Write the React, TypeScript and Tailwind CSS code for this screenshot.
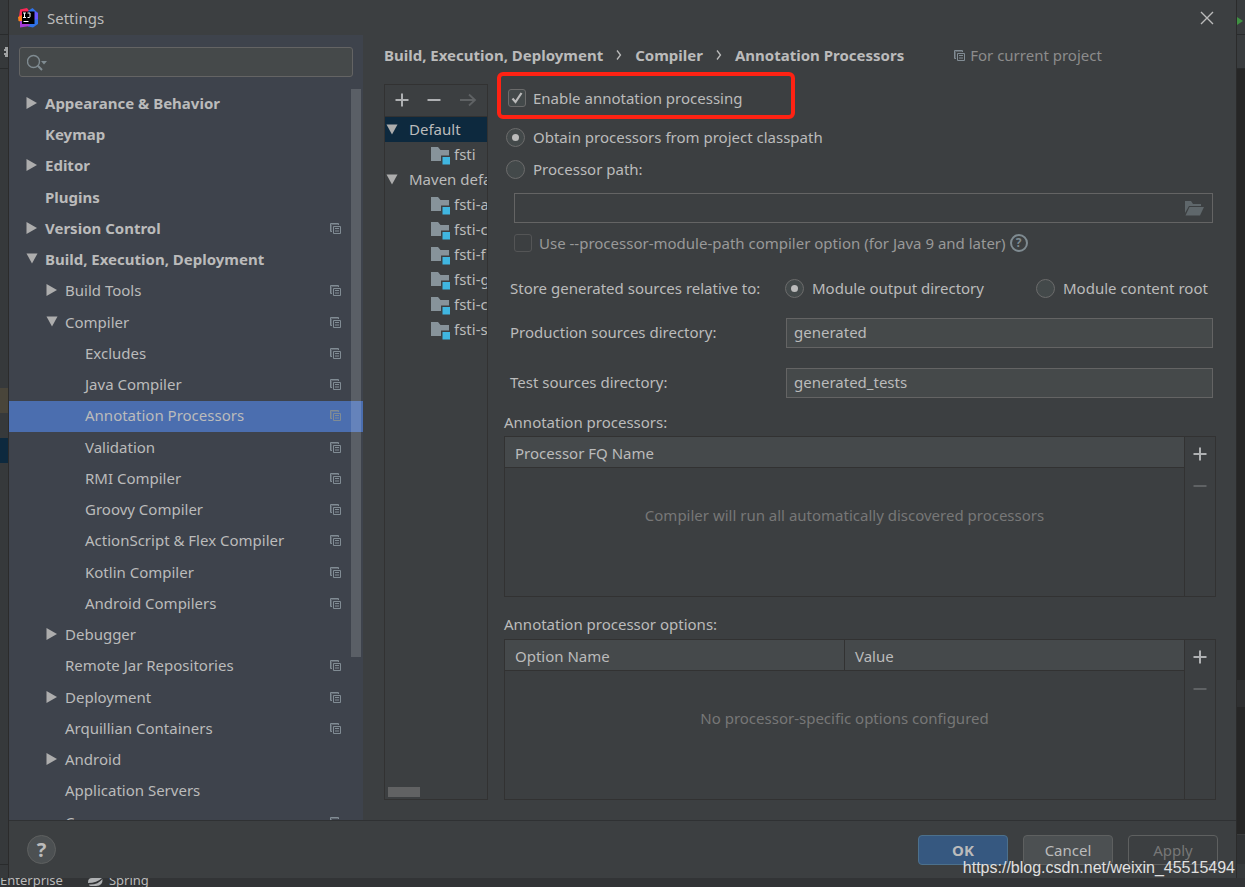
import { useState } from "react";
import type { InputHTMLAttributes, ReactNode } from "react";
import { clsx } from "clsx";

type TreeItem = {
  label: string;
  level: 0 | 1 | 2;
  state?: "open" | "closed";
  project?: boolean;
};

const TREE: TreeItem[] = [
  { label: "Appearance & Behavior", level: 0, state: "closed" },
  { label: "Keymap", level: 0 },
  { label: "Editor", level: 0, state: "closed" },
  { label: "Plugins", level: 0 },
  { label: "Version Control", level: 0, state: "closed", project: true },
  { label: "Build, Execution, Deployment", level: 0, state: "open" },
  { label: "Build Tools", level: 1, state: "closed", project: true },
  { label: "Compiler", level: 1, state: "open", project: true },
  { label: "Excludes", level: 2, project: true },
  { label: "Java Compiler", level: 2, project: true },
  { label: "Annotation Processors", level: 2, project: true },
  { label: "Validation", level: 2, project: true },
  { label: "RMI Compiler", level: 2, project: true },
  { label: "Groovy Compiler", level: 2, project: true },
  { label: "ActionScript & Flex Compiler", level: 2, project: true },
  { label: "Kotlin Compiler", level: 2, project: true },
  { label: "Android Compilers", level: 2, project: true },
  { label: "Debugger", level: 1, state: "closed" },
  { label: "Remote Jar Repositories", level: 1, project: true },
  { label: "Deployment", level: 1, state: "closed", project: true },
  { label: "Arquillian Containers", level: 1, project: true },
  { label: "Android", level: 1, state: "closed" },
  { label: "Application Servers", level: 1 },
  { label: "Coverage", level: 1, project: true },
];

const MODULES = ["fsti-a", "fsti-c", "fsti-f", "fsti-g", "fsti-c", "fsti-s"];

const INDENT = ["pl-[17px]", "pl-[37px]", "pl-[57px]"];

/* Icons */

const Arrow = ({ open }: { open: boolean }) => (
  <svg width="12" height="12" viewBox="0 0 12 12" fill="#adadad" className="shrink-0">
    {open ? <path d="M0.5 0.5h11L6 10.5z" /> : <path d="M0.5 0v12L11 6z" />}
  </svg>
);

const ProjectIcon = () => (
  <svg width="11" height="11" viewBox="0 0 11 11" fill="none" stroke="#818c94" className="shrink-0">
    <path d="M2 8.5H0.5v-8h8V2" />
    <path d="M3.5 3.5h7v7h-7z" />
    <path d="M5 5.5h4M5 8h4" />
    <path d="M1.5 8V1.5H8" opacity="0.5" />
  </svg>
);

const ModuleIcon = () => (
  <svg width="19" height="20" viewBox="0 0 19 20" className="shrink-0">
    <path d="M0 2h7l2.500 3H18v5.500h-8V16H0z" fill="#87939a" />
    <path d="M11.500 12h7.500v7.500h-7.500z" fill="#40b6e0" />
  </svg>
);

const FolderIcon = () => (
  <svg width="19" height="15" viewBox="0 0 19 15" fill="#5f676b">
    <path d="M0 0h6l2 3h8v2H4L0 12z" />
    <path d="M4.500 6H19l-4 8.500H0.500z" />
  </svg>
);

const PlusIcon = () => (
  <svg width="14" height="14" viewBox="0 0 14 14" stroke="#afb1b3" strokeWidth="2">
    <path d="M7 0.500v13M0.500 7h13" />
  </svg>
);

const MinusIcon = ({ dim }: { dim?: boolean }) => (
  <svg width="14" height="14" viewBox="0 0 14 14" stroke={dim ? "#5f6264" : "#afb1b3"} strokeWidth="2">
    <path d="M0.500 7h13" />
  </svg>
);

const AppLogo = () => (
  <svg width="20" height="20" viewBox="0 0 20 20">
    <path d="M2 1.500 9 0l3 4-6 8-5-3z" fill="#fe2857" />
    <path d="M0 9l4-2v7l-3.500-1z" fill="#fc801d" />
    <path d="M10 3l4.500-3L20 5v11l-5 3.500-5-1z" fill="#3073e8" />
    <path d="M15 3l5 2v6l-5 1z" fill="#6b57ff" />
    <path d="M2 13h8l2 5-10 1.500z" fill="#a63bd6" />
    <path d="M4 3.500h12.500V16H4z" fill="#000" />
    <path d="M5 5h3M6.500 5v4.500M5 9.500h3M9.500 5H12v3.500q0 1-1 1H9.500" fill="none" stroke="#fff" />
    <path d="M5.500 13.500h5" stroke="#fff" />
  </svg>
);

/* Form controls */

type ToggleProps = InputHTMLAttributes<HTMLInputElement> & { children: ReactNode };

const Checkbox = ({ children, ...props }: ToggleProps) => (
  <label className={clsx("flex items-center gap-[7px] whitespace-nowrap", props.disabled && "text-[#999999]")}>
    <span className="relative flex">
      <input
        type="checkbox"
        className="peer size-[18px] appearance-none rounded-[3px] border border-[#6b6b6b] bg-[#43494a] disabled:border-[#545556] disabled:bg-transparent"
        {...props}
      />
      <svg
        viewBox="0 0 18 18"
        className="pointer-events-none absolute inset-0 hidden size-[18px] peer-checked:block"
        fill="none"
        stroke="#bbbbbb"
        strokeWidth="2.2"
      >
        <path d="M4.500 9.500 7.500 13l6-9" />
      </svg>
    </span>
    {children}
  </label>
);

const Radio = ({ children, className, ...props }: ToggleProps) => (
  <label className={clsx("flex items-center gap-2 whitespace-nowrap", className)}>
    <span className="relative flex">
      <input
        type="radio"
        className="peer size-[19px] appearance-none rounded-full border border-[#6b6b6b] bg-[#43494a]"
        {...props}
      />
      <span className="pointer-events-none absolute inset-0 m-auto hidden size-[7px] rounded-full bg-[#bbbbbb] peer-checked:block" />
    </span>
    {children}
  </label>
);

const DirectoryField = ({ id, label, value }: { id: string; label: string; value: string }) => (
  <div className="flex items-center pr-[3px] pl-[6px]">
    <label htmlFor={id} className="w-[276px] shrink-0 pb-[2px]">
      {label}
    </label>
    <input
      id={id}
      type="text"
      defaultValue={value}
      className="h-[30px] min-w-0 flex-1 border border-[#646464] bg-[#45494a] px-[7px] pb-[2px] outline-none"
    />
  </div>
);

const OptionsTable = ({ columns, emptyText }: { columns: string[]; emptyText: string }) => (
  <div className="flex min-h-0 flex-1 border border-[#323232]">
    <div className="min-w-0 flex-1">
      <table className="w-full table-fixed border-collapse text-left">
        <thead>
          <tr className="h-[30px] border-b border-[#323232] bg-[#45494b]">
            {columns.map((c, i) => (
              <th key={c} className={clsx("px-[10px] pt-[2px] font-normal", i > 0 && "border-l border-[#323232]")}>
                {c}
              </th>
            ))}
          </tr>
        </thead>
        <tbody>
          <tr>
            <td colSpan={columns.length} className="pt-[37px] text-center text-[#777777]">
              {emptyText}
            </td>
          </tr>
        </tbody>
      </table>
    </div>
    <div className="flex w-[31px] flex-col items-center gap-[18px] border-l border-[#323232] pt-[10px]">
      <button type="button" aria-label="Add">
        <PlusIcon />
      </button>
      <button type="button" aria-label="Remove" disabled>
        <MinusIcon dim />
      </button>
    </div>
  </div>
);

/* Panels */

const Sidebar = ({ selected, onSelect }: { selected: string; onSelect: (label: string) => void }) => (
  <aside className="relative flex w-[354px] shrink-0 flex-col overflow-hidden bg-[#3e434c]">
    <div className="mx-[10px] mt-3 mb-3 flex h-[30px] shrink-0 items-center rounded-[3px] border border-[#646464] bg-[#45494a] pt-[2px] pl-[7px]">
      <svg width="22" height="18" viewBox="0 0 22 18" fill="none" stroke="#7f8b91" strokeWidth="1.400">
        <circle cx="6.500" cy="7.500" r="6" />
        <path d="M10.800 11.800 15 16" strokeWidth="2" />
        <path d="M14 7h6l-3 3.500z" fill="#7f8b91" stroke="none" />
      </svg>
      <input type="text" aria-label="Search settings" className="min-w-0 flex-1 bg-transparent outline-none" />
    </div>
    <ul>
      {TREE.map((item) => (
        <li key={item.label} className="nth-[4n]:mt-px">
          <button
            type="button"
            onClick={() => onSelect(item.label)}
            className={clsx(
              "flex h-[31px] w-full items-center pr-[22px] pb-[3px] text-left",
              INDENT[item.level],
              item.level === 0 && "font-bold",
              item.label === selected && "bg-[#4b6eaf]",
            )}
          >
            <span className="w-[19px] shrink-0">{item.state && <Arrow open={item.state === "open"} />}</span>
            <span className="flex-1">{item.label}</span>
            {item.project && <ProjectIcon />}
          </button>
        </li>
      ))}
    </ul>
    <div className="absolute top-[54px] right-[2px] h-[568px] w-[10px] bg-white/15" />
  </aside>
);

const ProfileList = () => (
  <div className="flex w-[104px] shrink-0 flex-col overflow-hidden border border-[#323232]">
    <div className="flex h-8 shrink-0 items-center gap-[18px] border-b border-[#323232] pb-[2px] pl-[10px]">
      <button type="button" aria-label="Add profile">
        <PlusIcon />
      </button>
      <button type="button" aria-label="Remove profile">
        <MinusIcon />
      </button>
      <button type="button" aria-label="Move to" disabled>
        <svg width="18" height="14" viewBox="0 0 18 14" fill="none" stroke="#5f6264" strokeWidth="1.800">
          <path d="M1 7h15M10 1.500 16 7l-6 5.500" />
        </svg>
      </button>
    </div>
    <ul className="flex-1 leading-[25px] whitespace-nowrap">
      <li className="flex items-center gap-[11px] bg-[#0d293e] pl-px">
        <Arrow open />
        Default
      </li>
      <li className="flex items-center gap-1 pl-[46px]">
        <ModuleIcon />
        fsti
      </li>
      <li className="flex items-center gap-[11px] pl-px">
        <Arrow open />
        Maven default
      </li>
      {MODULES.map((name, i) => (
        <li key={i} className="flex items-center gap-1 pl-[46px]">
          <ModuleIcon />
          {name}
        </li>
      ))}
    </ul>
    <div className="mb-[2px] ml-[3px] h-[10px] w-8 shrink-0 bg-[#616263]" />
  </div>
);

const ProcessorForm = () => (
  <form className="flex min-w-0 flex-1 flex-col">
    <div className="relative flex h-7 items-center pl-1">
      <Checkbox defaultChecked>Enable annotation processing</Checkbox>
      <div className="pointer-events-none absolute -top-3 left-[-7px] h-[47px] w-[298px] rounded-md border-4 border-[#ff2213]" />
    </div>
    <div className="mt-[9px] flex flex-col pl-[2px]">
      <Radio name="source" defaultChecked className="h-8">
        Obtain processors from project classpath
      </Radio>
      <Radio name="source" className="h-8">
        Processor path:
      </Radio>
    </div>
    <div className="mt-2 mr-[3px] ml-[10px] flex h-[30px] items-center border border-[#646464] pr-2">
      <input type="text" aria-label="Processor path" disabled className="min-w-0 flex-1 bg-transparent px-2" />
      <button type="button" aria-label="Browse" disabled>
        <FolderIcon />
      </button>
    </div>
    <div className="mt-2 flex h-6 items-center gap-1 pl-[10px]">
      <Checkbox disabled>Use --processor-module-path compiler option (for Java 9 and later)</Checkbox>
      <button
        type="button"
        aria-label="Show help"
        className="flex size-[18px] items-center justify-center rounded-full border-2 border-[#7f8b91] text-xs font-bold text-[#7f8b91]"
      >
        ?
      </button>
    </div>
    <div className="mt-[21px] flex h-6 items-center overflow-hidden pl-[6px]">
      <span className="w-[275px] shrink-0">Store generated sources relative to:</span>
      <Radio name="relative" defaultChecked className="w-[251px] shrink-0">
        Module output directory
      </Radio>
      <Radio name="relative">Module content root</Radio>
    </div>
    <div className="mt-[18px] flex flex-col gap-5">
      <DirectoryField id="production-dir" label="Production sources directory:" value="generated" />
      <DirectoryField id="test-dir" label="Test sources directory:" value="generated_tests" />
    </div>
    <h2 className="mt-3 mb-[2px] leading-6">Annotation processors:</h2>
    <OptionsTable
      columns={["Processor FQ Name"]}
      emptyText="Compiler will run all automatically discovered processors"
    />
    <h2 className="mt-[15px] mb-[3px] leading-6">Annotation processor options:</h2>
    <OptionsTable columns={["Option Name", "Value"]} emptyText="No processor-specific options configured" />
  </form>
);

const Separator = () => (
  <svg width="6" height="10" viewBox="0 0 6 10" fill="none" stroke="#bbbbbb" strokeWidth="1.300" className="mx-[13px]">
    <path d="M1 0.500 4.500 5 1 9.500" />
  </svg>
);

const Footer = () => (
  <footer className="flex h-[58px] shrink-0 items-center border-t border-[#2f3133] pr-[18px] pl-[18px]">
    <button
      type="button"
      aria-label="Help"
      className="flex size-[29px] items-center justify-center rounded-full border border-[#5e6060] bg-[#4c5052] text-xl font-bold"
    >
      ?
    </button>
    <div className="ml-auto flex gap-[15px]">
      <button type="button" className="h-[30px] w-[90px] rounded border border-[#4c708c] bg-[#365880] font-bold">
        OK
      </button>
      <button type="button" className="h-[30px] w-[90px] rounded border border-[#5e6060] bg-[#4c5052]">
        Cancel
      </button>
      <button type="button" disabled className="h-[30px] w-[90px] rounded border border-[#5e6060] text-[#777777]">
        Apply
      </button>
    </div>
  </footer>
);

export default function App() {
  const [selected, setSelected] = useState("Annotation Processors");

  return (
    <div className="relative flex h-screen flex-col overflow-hidden bg-[#36393b] font-['Noto_Sans','Noto_Sans_CJK_SC',sans-serif] text-[15px] leading-5 text-[#bbbbbb]">
      <div className="flex min-h-0 flex-1">
        {/* Editor window showing behind the dialog, left edge */}
        <div className="flex w-[9px] shrink-0 flex-col border-r border-[#2b2b2b] bg-[#36393b]">
          <div className="h-[35px] border-b border-[#292b2c]" />
          <div className="flex h-[34px] items-center justify-end border-b border-[#292b2c]">
            <svg width="4" height="10" viewBox="0 0 4 10" fill="#a0a2a3">
              <path d="M1 0h3v10H1V8H0V6h2V4H0V2h1z" />
            </svg>
          </div>
          <div className="h-[319px]" />
          <div className="h-[25px] bg-[#49453a]" />
          <div className="h-[25px]" />
          <div className="h-[25px] bg-[#0d293e]" />
          <div className="flex-1" />
          <div className="h-[14px] border-t border-[#292b2c]" />
        </div>

        <main className="flex min-w-0 flex-1 flex-col bg-[#3c3f41]">
          <header className="flex h-[35px] shrink-0 items-center pr-[22px] pl-[9px]">
            <AppLogo />
            <h1 className="ml-[9px]">Settings</h1>
            <button type="button" aria-label="Close" className="ml-auto">
              <svg width="14" height="14" viewBox="0 0 14 14" stroke="#bbbbbb" strokeWidth="1.400">
                <path d="m1 1 12 12M13 1 1 13" />
              </svg>
            </button>
          </header>

          <div className="flex min-h-0 flex-1">
            <Sidebar selected={selected} onSelect={setSelected} />
            <section className="flex min-w-0 flex-1 flex-col pr-5 pb-5 pl-[21px]">
              <nav className="mb-[9px] flex h-[40px] shrink-0 items-center font-bold whitespace-nowrap">
                <a href="#build">Build, Execution, Deployment</a>
                <Separator />
                <a href="#compiler">Compiler</a>
                <Separator />
                <a href="#processors">Annotation Processors</a>
                <span className="ml-[50px] flex items-center gap-[5px] font-normal text-[#8c8c8c]">
                  <ProjectIcon />
                  For current project
                </span>
              </nav>
              <div className="flex min-h-0 flex-1 gap-4">
                <ProfileList />
                <ProcessorForm />
              </div>
            </section>
          </div>

          <Footer />
        </main>

        {/* Right edge */}
        <div className="flex w-[9px] shrink-0 flex-col border-l border-[#2b2b2b] bg-[#262626]">
          <div className="flex h-[35px] items-center border-b border-[#292b2c] bg-[#393c3e] pt-2">
            <svg width="6" height="8" viewBox="0 0 6 8" fill="#3f9142">
              <path d="M0 0v8l6-4z" />
            </svg>
          </div>
          <div className="h-[34px] border-b border-[#292b2c] bg-[#393c3e]" />
          <div className="flex-1" />
          <div className="h-[27px] bg-[#2e2f30]" />
          <div className="h-[127px]" />
          <div className="h-[30px] border-t border-[#3a3c3d] bg-[#303234]" />
          <div className="h-[14px] bg-[#36393b]" />
        </div>
      </div>

      {/* Tool window bar under the dialog */}
      <div className="flex h-[9px] shrink-0 items-end overflow-hidden bg-[#323436] text-[13px] leading-[13px]">
        <span>Enterprise</span>
        <svg width="15" height="9" viewBox="0 0 15 9" fill="#afb1b3" className="mr-[6px] ml-[25px]">
          <path d="M1 1q1-1 3-1h10Q9 5 0 5 0 2 1 1z" />
          <path d="M14.500 1Q15 8 8 8H3Q1 8 1 6.500 10 7 14.500 1z" />
        </svg>
        <span>Spring</span>
      </div>

      <p className="pointer-events-none absolute right-[10px] bottom-[7px] font-['Liberation_Sans',Arial,sans-serif] text-base text-[#e0e0e0]">
        https://blog.csdn.net/weixin_45515494
      </p>
    </div>
  );
}
